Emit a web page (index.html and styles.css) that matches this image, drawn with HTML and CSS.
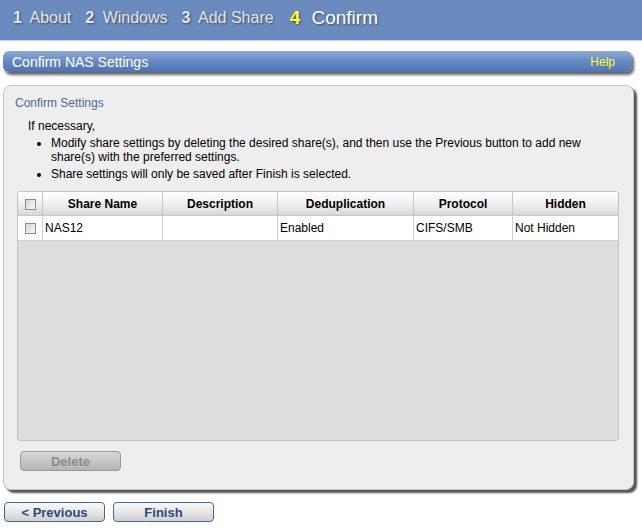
FILE: index.html
```html
<!DOCTYPE html>
<html>
<head>
<meta charset="utf-8">
<link rel="stylesheet" href="styles.css">
</head>
<body>
<div class="steps">
  <span class="step"><b>1</b> About</span>
  <span class="step"><b>2</b> Windows</span>
  <span class="step"><b>3</b> Add Share</span>
  <span class="step current"><b>4</b> Confirm</span>
</div>
<div class="titlebar">
  <span class="title">Confirm NAS Settings</span>
  <span class="help">Help</span>
</div>
<div class="panel">
  <div class="section">Confirm Settings</div>
  <div class="intro">If necessary,</div>
  <ul class="notes">
    <li>Modify share settings by deleting the desired share(s), and then use the Previous button to add new share(s) with the preferred settings.</li>
    <li>Share settings will only be saved after Finish is selected.</li>
  </ul>
  <div class="grid">
    <table>
      <thead>
        <tr>
          <th class="cb"><span class="box"></span></th>
          <th class="c1">Share Name</th>
          <th class="c2">Description</th>
          <th class="c3">Deduplication</th>
          <th class="c4">Protocol</th>
          <th class="c5">Hidden</th>
        </tr>
      </thead>
      <tbody>
        <tr>
          <td class="cb"><span class="box"></span></td>
          <td>NAS12</td>
          <td></td>
          <td>Enabled</td>
          <td>CIFS/SMB</td>
          <td>Not Hidden</td>
        </tr>
      </tbody>
    </table>
  </div>
  <button class="btn disabled">Delete</button>
</div>
<div class="nav">
  <button class="btn">&lt; Previous</button>
  <button class="btn">Finish</button>
</div>
</body>
</html>
```
FILE: styles.css
```css
html, body {
  margin: 0;
  padding: 0;
  background: #fff;
  font-family: Arial, "Liberation Sans", sans-serif;
  font-size: 12px;
  color: #000;
}
.steps {
  height: 41px;
  background: #6a8bbd;
  border-bottom: 1px solid #c9d3e3;
  display: flex;
  align-items: center;
  padding-left: 13px;
  gap: 14px;
  box-sizing: border-box;
}
.step {
  font-size: 16px;
  color: #e6e6e6;
  text-shadow: 1px 1px 2px #3c4c66;
  padding-bottom: 5px;
}
.step b {
  margin-right: 4px;
}
.step.current {
  font-size: 19px;
  color: #fff;
  margin-left: 2px;
}
.step.current b {
  color: #ffff33;
  margin-right: 6px;
}
.titlebar {
  margin: 10px 10px 0 3px;
  height: 21px;
  border-radius: 6px;
  background: linear-gradient(#8eaad6 0%, #6a8cc4 45%, #4d73b2 100%);
  box-shadow: 2px 3px 3px #666;
  display: flex;
  align-items: center;
  justify-content: space-between;
  padding: 0 17px 0 9px;
}
.title {
  color: #fff;
  font-size: 14px;
}
.help {
  color: #ffff33;
  font-size: 12px;
}
.panel {
  margin: 13px 8px 0 3px;
  height: 405px;
  box-sizing: border-box;
  background: #eeeeee;
  border: 1px solid #c8c8c8;
  border-radius: 8px;
  box-shadow: 3px 3px 2px #555;
  padding: 10px 14px 0 13px;
  display: flex;
  flex-direction: column;
}
.section {
  color: #4a6a9c;
  font-size: 12px;
  margin-bottom: 9px;
  margin-left: -2px;
}
.intro {
  margin-left: 11px;
  line-height: 14px;
}
.notes {
  margin: 3px 0 0 0;
  padding-left: 34px;
  line-height: 14px;
}
.notes li {
  margin-bottom: 3px;
}
.grid {
  margin-top: 7px;
  height: 250px;
  background: #dddddd;
  border: 1px solid #c4c4c4;
  border-radius: 3px;
  box-sizing: border-box;
  overflow: hidden;
}
table {
  width: 100%;
  border-collapse: collapse;
}
th {
  height: 23px;
  font-weight: bold;
  font-size: 12px;
  background: linear-gradient(#ffffff 0%, #f0f0f0 50%, #d8d8d8 100%);
  border-right: 1px solid #c8c8c8;
  border-bottom: 1px solid #c8c8c8;
  padding: 0;
}
td {
  height: 24px;
  background: #fff;
  border-right: 1px solid #d0d0d0;
  border-bottom: 1px solid #d0d0d0;
  padding: 0 0 0 2px;
  text-align: left;
}
th:last-child, td:last-child {
  border-right: none;
}
.cb {
  width: 24px;
  padding: 0;
  text-align: center;
}
.c1 { width: 119px; }
.c2 { width: 114px; }
.c3 { width: 135px; }
.c4 { width: 98px; }
.box {
  display: inline-block;
  width: 11px;
  height: 11px;
  border: 1px solid #8c8c8c;
  background: linear-gradient(135deg, #d4d4d4, #fafafa);
  vertical-align: middle;
  box-sizing: border-box;
}
.btn {
  width: 101px;
  height: 20px;
  border: 1px solid #3c6aa8;
  border-radius: 4px;
  background: linear-gradient(#fafafa 0%, #e6e6e6 50%, #cfcfcf 100%);
  color: #2c4a78;
  font-family: Arial, "Liberation Sans", sans-serif;
  font-weight: bold;
  font-size: 13px;
  padding: 0;
}
.btn.disabled {
  margin-top: 10px;
  margin-left: 3px;
  border-color: #9a9a9a;
  background: linear-gradient(#d8d8d8 0%, #c6c6c6 50%, #b4b4b4 100%);
  color: #8c8c8c;
}
.nav {
  display: flex;
  gap: 8px;
  padding: 12px 0 0 4px;
}
```
